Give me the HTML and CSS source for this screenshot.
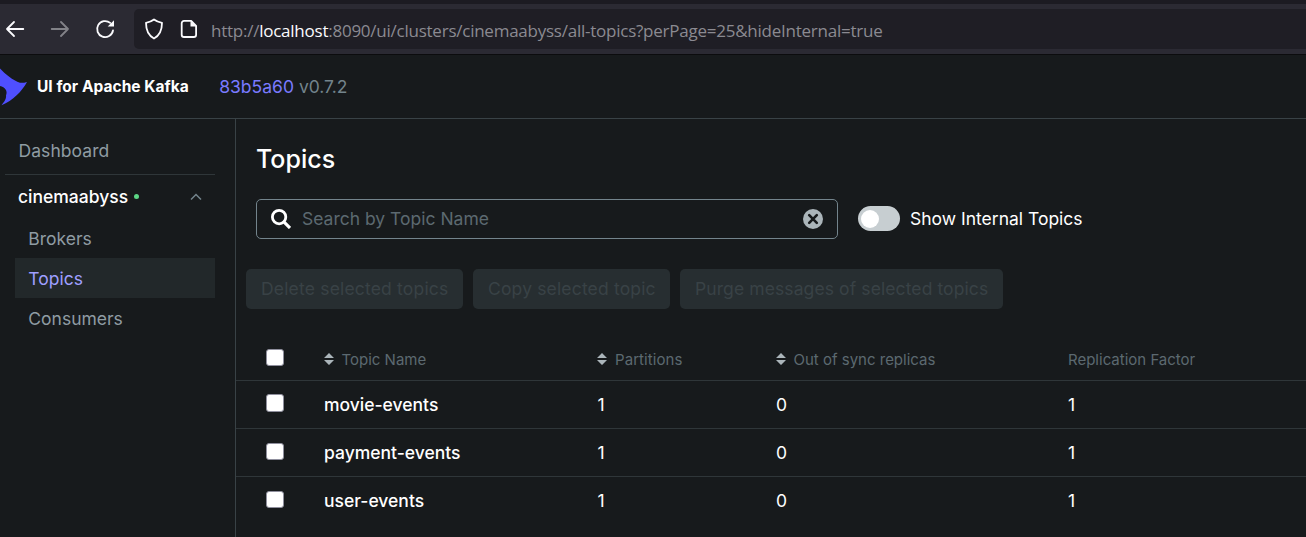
FILE: index.html
```html
<!DOCTYPE html>
<html lang="en">
<head>
<meta charset="utf-8">
<title>UI for Apache Kafka</title>
<link rel="stylesheet" href="styles.css">
</head>
<body>
<div class="toolbar">
  <svg class="nav-icon" width="20" height="20" viewBox="0 0 20 20"><path d="M18.3 10H2M9 3L2 10l7 7"/></svg>
  <svg class="nav-icon nav-icon-off" width="20" height="20" viewBox="0 0 20 20"><path d="M1.700 10H18M11 3l7 7-7 7"/></svg>
  <svg class="nav-icon" width="20" height="20" viewBox="0 0 20 20"><path d="M18 11.500A8 8 0 1 1 15.200 3.900"/><path class="solid" d="M19 1.200v6.300h-6.300z"/></svg>
  <div class="urlbar">
    <svg class="nav-icon" width="20" height="22" viewBox="0 0 20 22"><path d="M10 1.500c2.400 1.800 5 2.800 8 3.300 0 6.200-1.500 12.300-8 15.700C3.500 17.100 2 11 2 4.800c3-.5 5.600-1.500 8-3.300z"/></svg>
    <svg class="nav-icon" width="18" height="20" viewBox="0 0 18 20"><path d="M4 1.900h7.200l4.900 4.900v8.900a2.300 2.300 0 0 1-2.300 2.300H4a2.300 2.300 0 0 1-2.300-2.300V4.200A2.300 2.300 0 0 1 4 1.900z"/><path class="solid" d="M10.500 2v5.500h5.700z"/></svg>
    <span class="url">http://<b>localhost</b>:8090/ui/clusters/cinemaabyss/all-topics?perPage=25&amp;hideInternal=true</span>
  </div>
</div>
<header class="header">
  <svg class="logo" width="27" height="38" viewBox="0 0 27 38"><path d="M0 .5C5 6 13 12.500 20 14.700q3 .4 7-.8C22 23 13 32.500 1.500 37.200 4 34 6.500 31 6 27.500 8 23 5 19 0 18z"/></svg>
  <span class="brand">UI for Apache Kafka</span>
  <span class="version"><a>83b5a60</a> v0.7.2</span>
</header>
<div class="body">
  <nav class="sidebar">
    <div class="item dash">Dashboard</div>
    <div class="cluster"><span>cinemaabyss</span><i class="dot"></i><svg class="chevron" width="12" height="8" viewBox="0 0 12 8"><path d="M1 6.500l5-5 5 5"/></svg></div>
    <div class="sub">Brokers</div>
    <div class="sub active">Topics</div>
    <div class="sub">Consumers</div>
  </nav>
  <main class="main">
    <h1 class="title">Topics</h1>
    <div class="controls">
      <div class="search">
        <svg width="20" height="20" viewBox="0 0 20 20"><g fill="none" stroke="#fff" stroke-width="2.800"><circle cx="8.100" cy="8.100" r="6.700"/><path d="M12.900 12.900l6.100 6.100" stroke-width="3.200"/></g></svg>
        <span class="placeholder">Search by Topic Name</span>
        <svg width="20" height="20" viewBox="0 0 20 20"><circle cx="10" cy="10" r="10" fill="#abb5ba"/><path d="M6.200 6.200l7.600 7.600m0-7.600l-7.600 7.600" stroke="#171a1c" stroke-width="2.600" stroke-linecap="round"/></svg>
      </div>
      <div class="toggle"><i class="knob"></i></div>
      <span class="toggle-label">Show Internal Topics</span>
    </div>
    <div class="actions">
      <div class="btn btn-delete">Delete selected topics</div>
      <div class="btn btn-copy">Copy selected topic</div>
      <div class="btn btn-purge">Purge messages of selected topics</div>
    </div>
    <div class="table">
      <div class="row head">
        <i class="check"></i>
        <div class="cell"><svg class="sort" width="10" height="12" viewBox="0 0 10 12"><path d="M5 0l5 5H0zM0 7h10l-5 5z"/></svg><span>Topic Name</span></div>
        <div class="cell wide"><svg class="sort" width="10" height="12" viewBox="0 0 10 12"><path d="M5 0l5 5H0zM0 7h10l-5 5z"/></svg><span>Partitions</span></div>
        <div class="cell"><svg class="sort" width="10" height="12" viewBox="0 0 10 12"><path d="M5 0l5 5H0zM0 7h10l-5 5z"/></svg><span>Out of sync replicas</span></div>
        <div class="cell"><span>Replication Factor</span></div>
      </div>
      <div class="row"><i class="check tall"></i><div class="name">movie-events</div><div class="num">1</div><div>0</div><div>1</div></div>
      <div class="row"><i class="check"></i><div class="name">payment-events</div><div class="num">1</div><div>0</div><div>1</div></div>
      <div class="row last"><i class="check"></i><div class="name">user-events</div><div class="num">1</div><div>0</div><div>1</div></div>
    </div>
  </main>
</div>
</body>
</html>
```
FILE: styles.css
```css
* { box-sizing: border-box; }
body {
  margin: 0;
  height: 537px;
  overflow: hidden;
  display: flex;
  flex-direction: column;
  background: #171a1c;
  color: #fff;
  font: 17.5px/20px Inter, sans-serif;
  white-space: nowrap;
}
svg { flex: none; display: block; }
.toolbar {
  flex: none;
  height: 55px;
  display: flex;
  align-items: center;
  gap: 25px;
  padding: 0 0 1px 5px;
  background: #2b2a33;
  border-top: 4px solid #1c1b22;
  border-bottom: 1px solid #0c0c0e;
}
.nav-icon path { fill: none; stroke: #fbfbfe; stroke-width: 1.800; stroke-linecap: round; stroke-linejoin: round; }
.nav-icon .solid { fill: #fbfbfe; stroke: none; }
.nav-icon-off { opacity: .42; }
.urlbar {
  flex: 1;
  height: 40px;
  display: flex;
  align-items: center;
  margin-left: -6px;
  padding-left: 10px;
  background: #1f1e25;
  border-radius: 5px 0 0 5px;
}
.urlbar .nav-icon + .nav-icon { margin-left: 16px; }
.url { margin-left: 13px; padding-top: 4px; font: 17px/20px "Open Sans", "Noto Sans", sans-serif; letter-spacing: -.243px; color: #8b8a91; }
.url b { font-weight: 400; color: #fbfbfe; }
.header {
  flex: none;
  height: 64px;
  display: flex;
  align-items: center;
  border-bottom: 1px solid #394246;
}
.logo { fill: #4f4fff; }
.brand { margin-left: 10px; font-size: 15.500px; font-weight: 700; letter-spacing: .03px; }
.version { margin-left: 30.500px; color: #73848c; }
.version a { color: #7a7aff; }
.body { flex: 1; display: flex; min-height: 0; }
.sidebar {
  flex: none;
  width: 236px;
  padding: 11px 20px 0 5px;
  border-right: 1px solid #394246;
  color: #8f9ca3;
}
.dash { height: 45px; padding: 11px 0 0 13.500px; letter-spacing: .07px; border-bottom: 1px solid #2f3639; }
.cluster {
  height: 43px;
  display: flex;
  align-items: center;
  padding: 1px 13px 0;
  color: #fff;
  font-weight: 500;
}
.dot { width: 5px; height: 5px; margin: -1px 0 0 6px; border-radius: 50%; background: #5cd685; }
.chevron { margin-left: auto; fill: none; stroke: #73848c; stroke-width: 1.500; }
.sub { height: 40px; margin-left: 10px; padding: 11px 0 0 13.300px; }
.active { background: #22282a; color: #9f9fff; }
.main { flex: 1; min-width: 0; }
.title { margin: 25px 0 0 20px; font-size: 25px; line-height: 30px; font-weight: 500; }
.controls { display: flex; align-items: center; margin: 25px 0 0 20px; }
.search {
  width: 582px;
  height: 40px;
  display: flex;
  align-items: center;
  padding: 0 14px;
  border: 1px solid #73848c;
  border-radius: 5px;
}
.placeholder { flex: 1; margin-left: 11px; color: #5c6970; }
.toggle { width: 42px; height: 25px; margin: -2px 0 0 20px; padding: 4px 3px; border-radius: 13px; background: #c7ced1; }
.knob { display: block; width: 18px; height: 18px; border-radius: 50%; background: #fff; }
.toggle-label { margin-left: 10px; }
.actions { display: flex; gap: 10px; margin: 30px 0 0 10px; }
.btn { height: 40px; padding: 10px 15px 0; border-radius: 5px; background: #272e31; color: #394246; }
.btn-delete { width: 217px; letter-spacing: .18px; }
.btn-copy { width: 197px; letter-spacing: .16px; }
.btn-purge { width: 323px; letter-spacing: .1px; }
.table { margin-top: 28px; }
.row {
  height: 48px;
  display: grid;
  grid-template-columns: 58px 273px 179px 292px 1fr;
  align-items: center;
  padding-left: 30px;
  border-bottom: 1px solid #2f3639;
}
.head { height: 44px; color: #5c6970; font-size: 15px; }
.last { border-bottom: 0; }
.name { font-weight: 500; }
.num { padding-left: .6px; }
.cell { display: flex; align-items: center; gap: 7.500px; padding-top: 2px; }
.wide { gap: 8px; letter-spacing: .07px; }
.sort { fill: #abb5ba; margin-top: -2px; }
.check { width: 18px; height: 17px; margin-top: -3px; border: 1px solid #8f8f9d; border-radius: 3px; background: #fff; }
.tall { height: 18px; margin-top: -4px; }
```
